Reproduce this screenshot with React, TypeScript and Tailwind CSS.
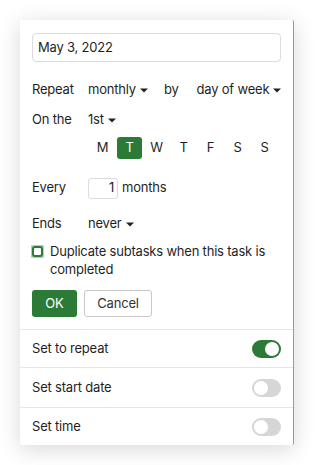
const Caret = () => (
  <svg width="8" height="5" viewBox="0 0 8 5" className="ml-[4px] inline-block shrink-0">
    <path d="M0 0.5h8L4 4.5z" fill="#222" />
  </svg>
);

const Toggle = ({ on }: { on: boolean }) => (
  <div
    className={`flex h-[18px] w-[29px] items-center rounded-full px-[2px] ${
      on ? "justify-end bg-[#2b7a35]" : "justify-start bg-[#d6d6d6]"
    }`}
  >
    <div className="h-[14px] w-[14px] rounded-full bg-white" />
  </div>
);

const days = ["M", "T", "W", "T", "F", "S", "S"];

const rows = [
  { label: "Set to repeat", on: true, h: "h-[38px]" },
  { label: "Set start date", on: false, h: "h-[40px]" },
  { label: "Set time", on: false, h: "h-[38px]" },
];

export default function App() {
  return (
    <div
      className="min-h-[465px] bg-white pt-5 pl-5 text-[13px] tracking-[-0.2px] text-[#1f1f1f]"
      style={{ fontFamily: "Inter, 'Noto Sans', sans-serif" }}
    >
      <div className="w-[274px] rounded-[2px] border-r border-[#9a9a9a] bg-white shadow-[0_4px_22px_rgba(0,0,0,0.16)]">
        <div className="px-3 pt-[13px] pb-3">
          <div className="flex h-[29px] items-center rounded-[4px] border border-[#dcdcdc] px-[5px]">
            May 3, 2022
          </div>

          <div className="mt-[13px] flex h-[30px] items-center whitespace-nowrap">
            <span className="w-[56px] shrink-0">Repeat</span>
            <span className="flex items-center">
              monthly
              <Caret />
            </span>
            <span className="ml-[16px]">by</span>
            <span className="ml-[18px] flex items-center">
              day of week
              <Caret />
            </span>
          </div>

          <div className="flex h-[30px] items-center whitespace-nowrap">
            <span className="w-[56px] shrink-0">On the</span>
            <span className="flex items-center">
              1st
              <Caret />
            </span>
          </div>

          <div className="mt-[2px] ml-[58px] flex gap-[2px]">
            {days.map((d, i) => (
              <div
                key={i}
                className={`flex h-[22px] w-[25px] items-center justify-center rounded-[3px] ${
                  i === 1 ? "bg-[#2b7a35] text-white" : ""
                }`}
              >
                {d}
              </div>
            ))}
          </div>

          <div className="mt-[14px] flex h-[30px] items-center whitespace-nowrap">
            <span className="w-[56px] shrink-0">Every</span>
            <div className="flex h-[21px] w-[30px] shrink-0 items-center justify-end rounded-[3px] border border-[#dcdcdc] pr-[3px]">
              1
            </div>
            <span className="ml-[4px]">months</span>
          </div>

          <div className="mt-[6px] flex h-[30px] items-center whitespace-nowrap">
            <span className="w-[56px] shrink-0">Ends</span>
            <span className="flex items-center">
              never
              <Caret />
            </span>
          </div>

          <div className="mt-[3px] flex items-start leading-[18px]">
            <div className="mt-[3px] ml-[-1px] h-[13px] w-[13px] shrink-0 rounded-[1px] bg-[#a8d8b0] p-[1px]">
              <div className="h-full w-full rounded-[3px] border-2 border-[#2b7a35] bg-white" />
            </div>
            <span className="ml-[6px]">
              Duplicate subtasks when this task is completed
            </span>
          </div>

          <div className="mt-[12px] flex gap-[7px]">
            <button className="h-[27px] w-[45px] rounded-[3px] bg-[#2b7a35] text-white">
              OK
            </button>
            <button className="h-[27px] w-[68px] rounded-[3px] border border-[#c8c8c8] text-[#333]">
              Cancel
            </button>
          </div>
        </div>

        {rows.map((r) => (
          <div
            key={r.label}
            className={`flex ${r.h} items-center justify-between border-t border-[#e6e6e6] px-3`}
          >
            <span>{r.label}</span>
            <Toggle on={r.on} />
          </div>
        ))}
      </div>
    </div>
  );
}
